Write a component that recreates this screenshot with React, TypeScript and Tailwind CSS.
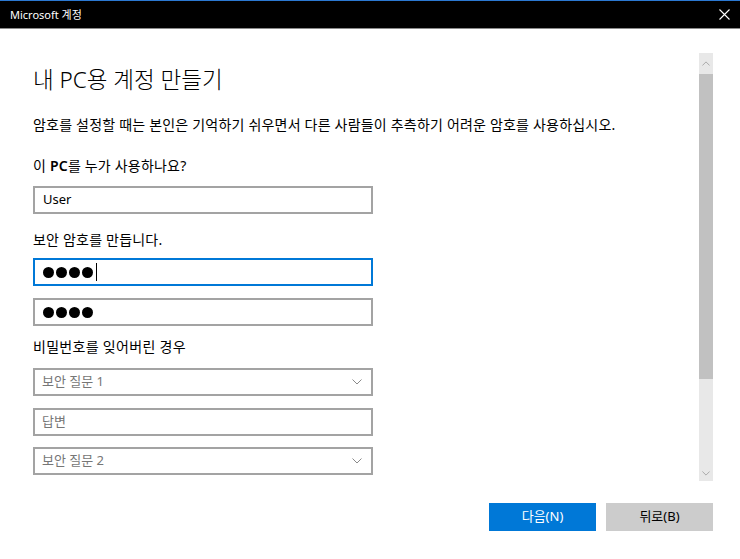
import React from "react";

const font = { fontFamily: '"Noto Sans", "Noto Sans CJK KR", sans-serif' };

function Chevron({ up = false, color = "#7a7a7a", w = 10 }: { up?: boolean; color?: string; w?: number }) {
  return (
    <svg width={w} height={w / 2 + 1} viewBox="0 0 10 6" fill="none">
      <path
        d={up ? "M0.5 5.5 L5 1 L9.5 5.5" : "M0.5 0.5 L5 5 L9.5 0.5"}
        stroke={color}
        strokeWidth="1"
      />
    </svg>
  );
}

function Dots({ caret = false }: { caret?: boolean }) {
  return (
    <div className="flex items-center gap-[2px]">
      {[0, 1, 2, 3].map((i) => (
        <span key={i} className="block w-[11px] h-[11px] rounded-full bg-black" />
      ))}
      {caret && <span className="block w-[1px] h-[18px] bg-black ml-[1px]" />}
    </div>
  );
}

export default function App() {
  return (
    <div className="w-[740px] h-[559px] bg-white flex flex-col overflow-hidden" style={font}>
      {/* title bar */}
      <div className="h-[1px] bg-[#2b78d1]" />
      <div className="h-[27px] bg-black flex items-center justify-between pl-[10px] pr-[10px]">
        <span className="text-white text-[11px] leading-none">Microsoft 계정</span>
        <svg width="11" height="11" viewBox="0 0 11 11">
          <path d="M0.5 0.5 L10.5 10.5 M10.5 0.5 L0.5 10.5" stroke="white" strokeWidth="1.1" />
        </svg>
      </div>
      <div className="h-[1px] bg-[#8a8a8a]" />

      {/* body */}
      <div className="h-[474px] flex">
        <div className="flex-1 flex flex-col pl-[33px] text-black">
          <h1 className="mt-[35px] text-[22.5px] leading-[32px] font-light">내 PC용 계정 만들기</h1>
          <p className="mt-[19px] text-[14px] leading-[20px] tracking-[0.2px]">
            암호를 설정할 때는 본인은 기억하기 쉬우면서 다른 사람들이 추측하기 어려운 암호를 사용하십시오.
          </p>
          <div className="mt-[21px] text-[14px] leading-[20px] tracking-[0.2px]">
            이 <span className="font-semibold">PC</span>를 누가 사용하나요?
          </div>
          <div className="mt-[10px] w-[340px] h-[28px] border-2 border-[#a3a3a3] flex items-center px-[8px] text-[13px]">
            User
          </div>
          <div className="mt-[16px] text-[14px] leading-[20px] tracking-[0.2px]">보안 암호를 만듭니다.</div>
          <div className="mt-[8px] w-[340px] h-[28px] border-2 border-[#0078d7] flex items-center px-[8px]">
            <Dots caret />
          </div>
          <div className="mt-[12px] w-[340px] h-[28px] border-2 border-[#a3a3a3] flex items-center px-[8px]">
            <Dots />
          </div>
          <div className="mt-[11px] text-[14px] leading-[20px] tracking-[0.3px]">비밀번호를 잊어버린 경우</div>
          <div className="mt-[11px] w-[340px] h-[28px] border-2 border-[#a3a3a3] flex items-center justify-between pl-[7px] pr-[9px] text-[13px] text-[#767676]">
            <span>보안 질문 1</span>
            <Chevron color="#8a8a8a" />
          </div>
          <div className="mt-[12px] w-[340px] h-[28px] border-2 border-[#a3a3a3] flex items-center px-[7px] text-[13px] text-[#767676]">
            답변
          </div>
          <div className="mt-[11px] w-[340px] h-[28px] border-2 border-[#a3a3a3] flex items-center justify-between pl-[7px] pr-[9px] text-[13px] text-[#767676]">
            <span>보안 질문 2</span>
            <Chevron color="#8a8a8a" />
          </div>
        </div>

        {/* scrollbar */}
        <div className="mt-[24px] mr-[27px] w-[14px] h-[428px] flex flex-col bg-[#e8e8e8]">
          <div className="h-[21px] flex items-center justify-center">
            <Chevron up color="#9a9a9a" w={8} />
          </div>
          <div className="h-[305px] bg-[#c1c1c1]" />
          <div className="flex-1" />
          <div className="h-[16px] flex items-center justify-center">
            <Chevron color="#9a9a9a" w={8} />
          </div>
        </div>
      </div>

      {/* footer */}
      <div className="flex justify-end gap-[10px] pr-[27px]">
        <button className="w-[107px] h-[28px] bg-[#0078d7] text-white text-[13px] flex items-center justify-center">
          다음(N)
        </button>
        <button className="w-[107px] h-[28px] bg-[#cccccc] text-black text-[13px] flex items-center justify-center">
          뒤로(B)
        </button>
      </div>
    </div>
  );
}
